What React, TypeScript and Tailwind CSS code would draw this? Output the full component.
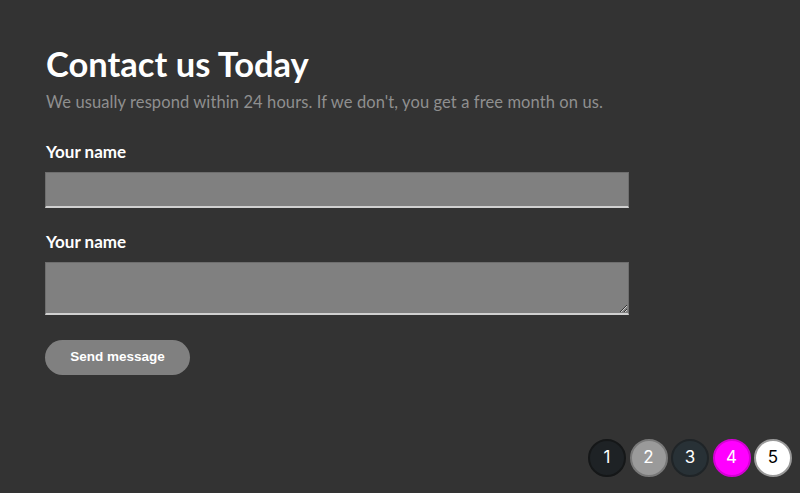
const SWATCHES = [
  { n: 1, cls: 'bg-[#1e2225] border-[#151718] text-white' },
  { n: 2, cls: 'bg-[#9a9a9a] border-[#787878] text-white' },
  { n: 3, cls: 'bg-[#283136] border-[#1f2427] text-white' },
  { n: 4, cls: 'bg-[#ff00ff] border-[#d400d4] text-white' },
  { n: 5, cls: 'bg-white border-[#9a9a9a] text-black' },
]

export default function App() {
  return (
    <div className="relative w-[800px] h-[493px] bg-[#333333] overflow-hidden font-['Lato',sans-serif]">
      <div className="pl-[46px] pt-[44px] w-[629px]">
        <h1 className="text-[34.5px] font-bold text-white leading-[40px]">Contact us Today</h1>
        <p className="mt-[8px] text-[16.5px] tracking-[0.1px] text-[#8f8f8f] leading-[20px] whitespace-nowrap">
          We usually respond within 24 hours. If we don't, you get a free month on us.
        </p>

        <form className="mt-[30px] flex flex-col" onSubmit={e => e.preventDefault()}>
          <label className="text-[17px] font-bold text-white leading-[20px]">Your name</label>
          <input
            type="text"
            className="mt-[10px] -ml-px h-[36px] w-[584px] bg-[#808080] border border-[#6e6e6e] border-b-2 border-b-[#d0d0d0] outline-none"
          />

          <label className="mt-[24px] text-[17px] font-bold text-white leading-[20px]">Your name</label>
          <textarea
            className="mt-[10px] -ml-px h-[53px] w-[584px] bg-[#808080] border border-[#6e6e6e] border-b-2 border-b-[#d0d0d0] outline-none resize-y"
          />

          <button
            type="submit"
            className="mt-[25px] -ml-px w-[145px] h-[35px] rounded-full bg-[#808080] text-white text-[13.5px] font-bold font-['Liberation_Sans',sans-serif]"
          >
            Send message
          </button>
        </form>
      </div>

      <div className="absolute right-[8px] bottom-[16px] flex gap-[3.5px]">
        {SWATCHES.map(s => (
          <div
            key={s.n}
            className={`w-[38px] h-[38px] rounded-full border-2 flex items-center justify-center text-[17px] font-['Inter',sans-serif] ${s.cls}`}
          >
            {s.n}
          </div>
        ))}
      </div>
    </div>
  )
}
